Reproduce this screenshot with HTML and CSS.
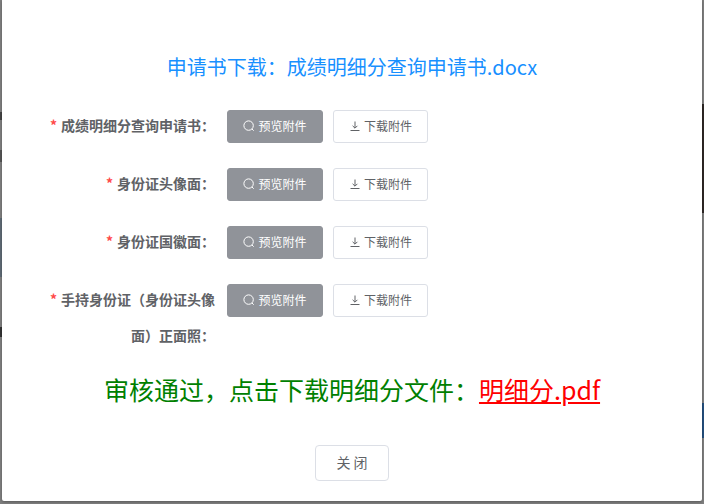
FILE: index.html
```html
<!DOCTYPE html>
<html lang="zh-CN">
  <head>
    <meta charset="UTF-8" />
    <meta name="viewport" content="width=device-width, initial-scale=1.0" />
    <title>申请书下载</title>
    <link rel="stylesheet" href="styles.css">
  </head>
  <body>
    <div class="dialog">
      <h2 class="file-title">申请书下载：成绩明细分查询申请书.docx</h2>

      <form class="attach-form">
        <div class="form-item">
          <label class="form-label"><span class="required">*</span>成绩明细分查询申请书：</label>
          <div class="form-actions">
            <button type="button" class="btn btn-preview">
              <svg class="btn-icon" viewBox="0 0 12 12"><circle cx="5.6" cy="5.6" r="4.7"/><path d="M9 9l1.7 1.7"/></svg>预览附件
            </button>
            <button type="button" class="btn btn-download">
              <svg class="btn-icon" viewBox="0 0 12 12"><path d="M6 1.5v6.5M3.6 5.8L6 8.2l2.4-2.4M1.5 10.5h9"/></svg>下载附件
            </button>
          </div>
        </div>
        <div class="form-item">
          <label class="form-label"><span class="required">*</span>身份证头像面：</label>
          <div class="form-actions">
            <button type="button" class="btn btn-preview">
              <svg class="btn-icon" viewBox="0 0 12 12"><circle cx="5.6" cy="5.6" r="4.7"/><path d="M9 9l1.7 1.7"/></svg>预览附件
            </button>
            <button type="button" class="btn btn-download">
              <svg class="btn-icon" viewBox="0 0 12 12"><path d="M6 1.5v6.5M3.6 5.8L6 8.2l2.4-2.4M1.5 10.5h9"/></svg>下载附件
            </button>
          </div>
        </div>
        <div class="form-item">
          <label class="form-label"><span class="required">*</span>身份证国徽面：</label>
          <div class="form-actions">
            <button type="button" class="btn btn-preview">
              <svg class="btn-icon" viewBox="0 0 12 12"><circle cx="5.6" cy="5.6" r="4.7"/><path d="M9 9l1.7 1.7"/></svg>预览附件
            </button>
            <button type="button" class="btn btn-download">
              <svg class="btn-icon" viewBox="0 0 12 12"><path d="M6 1.5v6.5M3.6 5.8L6 8.2l2.4-2.4M1.5 10.5h9"/></svg>下载附件
            </button>
          </div>
        </div>
        <div class="form-item">
          <label class="form-label"><span class="required">*</span>手持身份证（身份证头像面）正面照：</label>
          <div class="form-actions">
            <button type="button" class="btn btn-preview">
              <svg class="btn-icon" viewBox="0 0 12 12"><circle cx="5.6" cy="5.6" r="4.7"/><path d="M9 9l1.7 1.7"/></svg>预览附件
            </button>
            <button type="button" class="btn btn-download">
              <svg class="btn-icon" viewBox="0 0 12 12"><path d="M6 1.5v6.5M3.6 5.8L6 8.2l2.4-2.4M1.5 10.5h9"/></svg>下载附件
            </button>
          </div>
        </div>
      </form>

      <p class="result">审核通过，点击下载明细分文件：<a class="result-link" href="#">明细分.pdf</a></p>

      <div class="dialog-footer">
        <button type="button" class="btn-close">关 闭</button>
      </div>
    </div>
  </body>
</html>
```

FILE: styles.css
```css
html,
body {
  margin: 0;
  height: 100%;
  overflow: hidden;
}
body {
  /* page behind the mask only shows in the 2px either side of the dialog */
  background:
    linear-gradient(to bottom, transparent 104px, #2e2826 104px, #2e2826 213px, transparent 213px, transparent 403px, #24507f 403px, #24507f 438px, transparent 438px) right top / 2px 100% no-repeat,
    linear-gradient(to bottom, transparent 112px, #444 112px, #444 120px, transparent 120px, transparent 150px, #555 150px, #555 162px, transparent 162px, transparent 218px, #5f6b75 218px, #5f6b75 277px, transparent 277px, transparent 327px, #333 327px, #333 337px, transparent 337px) left top / 2px 100% no-repeat,
    #7f7f7f;
  font-family: "Noto Sans CJK SC", "Open Sans", sans-serif;
}
.dialog {
  width: 700px;
  height: 501px;
  margin-left: 2px;
  background-color: white;
  border-radius: 0 0 2px 2px;
  box-shadow: 0 1px 3px rgba(0, 0, 0, 0.3);
  box-sizing: border-box;
  padding-top: 52px;
}
.file-title {
  margin: 0;
  height: 30px;
  line-height: 30px;
  font-size: 20px;
  font-weight: 400;
  color: #1890ff;
  text-align: center;
}
.attach-form {
  margin-top: 25px;
  padding-left: 45px;
}
.form-item {
  display: flex;
  margin-bottom: 22px;
}
.form-item:last-child {
  margin-bottom: 0;
}
.form-label {
  width: 168px;
  padding-right: 12px;
  font-size: 14px;
  font-weight: 700;
  line-height: 36px;
  color: #606266;
  text-align: right;
}
.required {
  margin-right: 4px;
  color: #ff4949;
}
.form-actions {
  display: flex;
  gap: 10px;
  height: 33px;
  margin-top: 3px;
}
.btn {
  display: flex;
  align-items: center;
  justify-content: center;
  box-sizing: border-box;
  height: 33px;
  padding: 0 0 2px;
  border-radius: 3px;
  font-family: inherit;
  font-size: 12px;
}
.btn-preview {
  width: 96px;
  border: 1px solid #909399;
  background-color: #909399;
  color: white;
}
.btn-download {
  width: 95px;
  border: 1px solid #dcdfe6;
  background-color: white;
  color: #606266;
}
.btn-icon {
  width: 12px;
  height: 12px;
  margin-right: 3px;
  fill: none;
  stroke: currentColor;
  stroke-width: 1;
}
.result {
  margin: 18px 0 0;
  height: 36px;
  line-height: 36px;
  font-size: 25px;
  color: green;
  text-align: center;
}
.result-link {
  color: red;
}
.dialog-footer {
  margin-top: 38px;
  text-align: center;
}
.btn-close {
  width: 74px;
  height: 36px;
  padding: 0 0 2px;
  border: 1px solid #dcdfe6;
  border-radius: 4px;
  background-color: white;
  font-family: inherit;
  font-size: 14px;
  color: #606266;
}
```
